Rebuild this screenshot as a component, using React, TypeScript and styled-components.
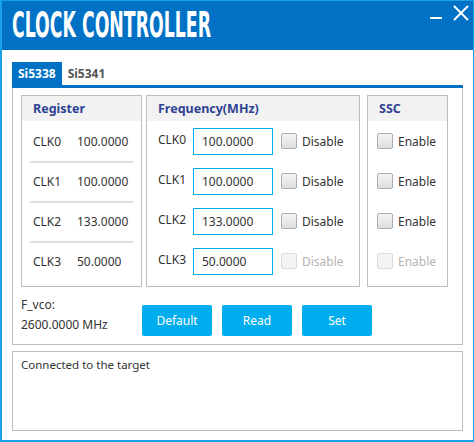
import React from 'react'
import styled, { createGlobalStyle } from 'styled-components'

const GlobalStyle = createGlobalStyle`
  html, body {
    margin: 0;
    padding: 0;
    background: #ffffff;
  }
  * {
    box-sizing: border-box;
  }
`

const UI = `"Noto Sans", "Open Sans", sans-serif`

interface ClockRow {
  name: string
  register: string
  freq: string
  disabled?: boolean
}

const rows: ClockRow[] = [
  { name: 'CLK0', register: '100.0000', freq: '100.0000' },
  { name: 'CLK1', register: '100.0000', freq: '100.0000' },
  { name: 'CLK2', register: '133.0000', freq: '133.0000' },
  { name: 'CLK3', register: '50.0000', freq: '50.0000', disabled: true },
]

const Window = styled.div`
  width: 474px;
  height: 442px;
  border-style: solid;
  border-color: #19a3e6;
  border-width: 1px 1px 2px 2px;
  display: flex;
  flex-direction: column;
  font-family: ${UI};
  color: #333;
  background: #fff;
`

const TitleBar = styled.header`
  height: 49px;
  flex: none;
  background: #0071c5;
  display: flex;
  align-items: center;
  justify-content: space-between;
  padding: 0 4px 0 10px;
  overflow: hidden;
`

const Title = styled.h1`
  margin: 0;
  font-family: "DejaVu Sans Condensed", "DejaVu Sans", sans-serif;
  font-weight: 700;
  font-size: 35px;
  line-height: 1;
  color: #fff;
  transform: scaleX(0.55);
  transform-origin: left center;
  white-space: nowrap;
`

const Controls = styled.div`
  align-self: flex-start;
  display: flex;
  align-items: center;
  gap: 10px;
  padding-top: 4px;
`

const Body = styled.div`
  flex: 1;
  display: flex;
  flex-direction: column;
  padding: 12px 10px 10px 10px;
`

const TabStrip = styled.div`
  display: flex;
  height: 26px;
  border-bottom: 3px solid #0071c5;
`

const Tab = styled.div<{ $active?: boolean }>`
  height: 23px;
  padding: 0 6px;
  display: flex;
  align-items: center;
  font-size: 12px;
  font-weight: 700;
  color: ${p => (p.$active ? '#fff' : '#555')};
  background: ${p => (p.$active ? '#0071c5' : 'transparent')};
`

const TabPane = styled.div`
  height: 257px;
  border: 1px solid #bdbdbd;
  border-top: none;
  padding: 7px 8px 0 8px;
  display: flex;
  flex-direction: column;
`

const Groups = styled.div`
  display: flex;
  gap: 4px;
`

const Group = styled.section<{ $w: number; $ml?: number }>`
  width: ${p => p.$w}px;
  margin-left: ${p => p.$ml ?? 0}px;
  height: 192px;
  border: 1px solid #bdbdbd;
  display: flex;
  flex-direction: column;
`

const GroupHead = styled.div`
  height: 25px;
  background: #f2f2f2;
  display: flex;
  align-items: center;
  padding-left: 11px;
  font-size: 12.5px;
  font-weight: 700;
  color: #2f4294;
`

const RegRow = styled.div<{ $line?: boolean }>`
  height: 40px;
  margin: 0 8px;
  padding-left: 3px;
  padding-bottom: 2px;
  display: flex;
  align-items: center;
  font-size: 12px;
  border-top: ${p => (p.$line ? '2px solid #dedede' : '2px solid transparent')};
`

const RegName = styled.span`
  width: 44px;
`

const FreqRow = styled.div`
  height: 40px;
  padding-left: 11px;
  display: flex;
  align-items: center;
  font-size: 12px;
`

const FreqName = styled.span`
  width: 35px;
  margin-top: -3px;
`

const Input = styled.input`
  width: 80px;
  height: 27px;
  border: 1px solid #00aeef;
  padding: 0 8px;
  font-family: ${UI};
  font-size: 12px;
  color: #333;
  outline: none;
  margin: 0;
`

const Check = styled.span<{ $disabled?: boolean }>`
  width: 16px;
  height: 16px;
  border-radius: 2px;
  flex: none;
  border: 1px solid ${p => (p.$disabled ? '#dcdcdc' : '#acacac')};
  background: ${p => (p.$disabled ? '#f4f4f4' : 'linear-gradient(#f3f3f3, #dedede)')};
`

const CheckLabel = styled.span<{ $disabled?: boolean }>`
  margin-left: 5px;
  font-size: 12px;
  color: ${p => (p.$disabled ? '#b3b3b3' : '#333')};
`

const CheckWrap = styled.label<{ $ml: number }>`
  display: flex;
  align-items: center;
  margin-left: ${p => p.$ml}px;
`

const SscRow = styled.div`
  height: 40px;
  padding-left: 9px;
  display: flex;
  align-items: center;
`

const Footer = styled.div`
  display: flex;
  align-items: flex-start;
  padding-top: 10px;
`

const Vco = styled.div`
  width: 121px;
  font-size: 12px;
  line-height: 20px;
  margin-top: -2px;
`

const Buttons = styled.div`
  display: flex;
  gap: 10px;
  padding-top: 8px;
`

const Button = styled.button`
  width: 70px;
  height: 31px;
  border: none;
  border-radius: 2px;
  background: #00aeef;
  color: #fff;
  font-family: ${UI};
  font-size: 12px;
  padding: 0;
`

const Log = styled.div`
  margin-top: 6px;
  height: 80px;
  border: 1px solid #bdbdbd;
  padding: 5px 8px;
  font-size: 11.5px;
  color: #333;
`

const MinIcon = () => (
  <svg width="13" height="14" viewBox="0 0 13 14">
    <rect x="0" y="11" width="12" height="2" fill="#fff" />
  </svg>
)

const CloseIcon = () => (
  <svg width="16" height="16" viewBox="0 0 16 16">
    <path d="M1 1 L15 15 M15 1 L1 15" stroke="#fff" strokeWidth="2" fill="none" />
  </svg>
)

const App = () => (
  <>
    <GlobalStyle />
    <Window>
      <TitleBar>
        <Title>CLOCK CONTROLLER</Title>
        <Controls>
          <MinIcon />
          <CloseIcon />
        </Controls>
      </TitleBar>
      <Body>
        <TabStrip>
          <Tab $active>Si5338</Tab>
          <Tab>Si5341</Tab>
        </TabStrip>
        <TabPane>
          <Groups>
            <Group $w={121}>
              <GroupHead>Register</GroupHead>
              {rows.map((r, i) => (
                <RegRow key={r.name} $line={i > 0}>
                  <RegName>{r.name}</RegName>
                  <span>{r.register}</span>
                </RegRow>
              ))}
            </Group>
            <Group $w={214}>
              <GroupHead>Frequency(MHz)</GroupHead>
              {rows.map(r => (
                <FreqRow key={r.name}>
                  <FreqName>{r.name}</FreqName>
                  <Input defaultValue={r.freq} />
                  <CheckWrap $ml={8}>
                    <Check $disabled={r.disabled} />
                    <CheckLabel $disabled={r.disabled}>Disable</CheckLabel>
                  </CheckWrap>
                </FreqRow>
              ))}
            </Group>
            <Group $w={81} $ml={3}>
              <GroupHead>SSC</GroupHead>
              {rows.map(r => (
                <SscRow key={r.name}>
                  <CheckWrap $ml={0}>
                    <Check $disabled={r.disabled} />
                    <CheckLabel $disabled={r.disabled}>Enable</CheckLabel>
                  </CheckWrap>
                </SscRow>
              ))}
            </Group>
          </Groups>
          <Footer>
            <Vco>
              F_vco:
              <br />
              2600.0000 MHz
            </Vco>
            <Buttons>
              <Button>Default</Button>
              <Button>Read</Button>
              <Button>Set</Button>
            </Buttons>
          </Footer>
        </TabPane>
        <Log>Connected to the target</Log>
      </Body>
    </Window>
  </>
)

export default App
